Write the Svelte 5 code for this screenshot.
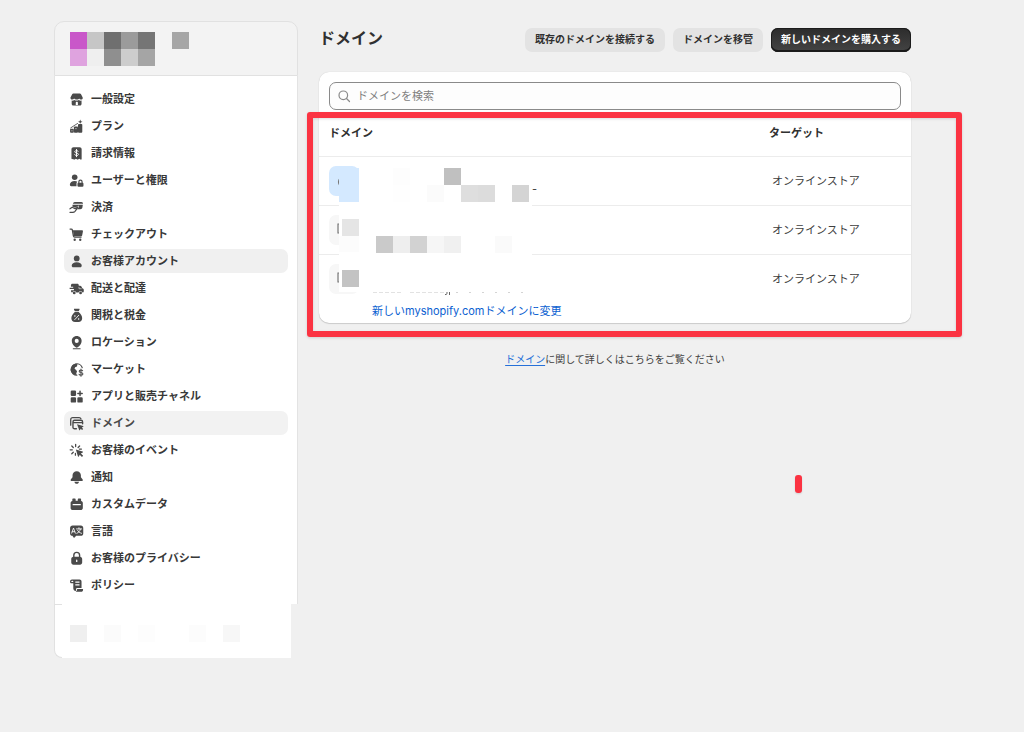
<script>
  const navItems = [
    { icon: 'store', label: '一般設定' },
    { icon: 'plan', label: 'プラン' },
    { icon: 'billing', label: '請求情報' },
    { icon: 'users', label: 'ユーザーと権限' },
    { icon: 'payments', label: '決済' },
    { icon: 'cart', label: 'チェックアウト' },
    { icon: 'person', label: 'お客様アカウント', tone: 'hovered' },
    { icon: 'truck', label: '配送と配達' },
    { icon: 'tax', label: '関税と税金' },
    { icon: 'pin', label: 'ロケーション' },
    { icon: 'globe', label: 'マーケット' },
    { icon: 'apps', label: 'アプリと販売チャネル' },
    { icon: 'domain', label: 'ドメイン', tone: 'current' },
    { icon: 'events', label: 'お客様のイベント' },
    { icon: 'bell', label: '通知' },
    { icon: 'data', label: 'カスタムデータ' },
    { icon: 'language', label: '言語' },
    { icon: 'lock', label: 'お客様のプライバシー' },
    { icon: 'policy', label: 'ポリシー' }
  ];

  const rows = [
    { tone: 'blue', target: 'オンラインストア' },
    { tone: 'grey', target: 'オンラインストア' },
    { tone: 'grey', target: 'オンラインストア' }
  ];

  // Pixelated blocks: [x, y, width, height, colour]
  const headerBlocks = [
    [0, 0, 17, 17, '#c957c9'], [17, 0, 17, 17, '#c6c6c6'], [34, 0, 17, 17, '#6f6f6f'],
    [51, 0, 17, 17, '#9b9b9b'], [68, 0, 17, 17, '#757575'], [102, 0, 17, 17, '#a6a6a6'],
    [0, 17, 17, 17, '#dfa3df'], [17, 17, 17, 17, '#efefef'], [34, 17, 17, 17, '#8f8f8f'],
    [51, 17, 17, 17, '#cdcdcd'], [68, 17, 17, 17, '#a5a5a5']
  ];
  const footerBlocks = [
    [0, 0, 17, 17, '#efefef'], [34, 0, 17, 17, '#fbfbfb'], [68, 0, 17, 17, '#fdfdfd'],
    [119, 0, 17, 17, '#fcfcfc'], [153, 0, 17, 17, '#f7f7f7']
  ];
  const tableBlocks = [
    [0, 0, 20, 34, '#d4e9ff'], [54, 0, 17, 17, '#fdfdfd'], [54, 17, 17, 17, '#fefefe'],
    [88, 17, 17, 17, '#fbfbfb'], [105, 0, 17, 17, '#c0c0c0'], [122, 17, 17, 17, '#dedede'],
    [139, 17, 17, 17, '#dcdcdc'], [173, 17, 17, 17, '#d4d4d4'],
    [3, 51, 17, 17, '#e5e5e5'], [0, 68, 20, 16, '#fcfcfc'], [37, 68, 17, 17, '#cacaca'],
    [54, 68, 17, 17, '#eeeeee'], [71, 68, 17, 17, '#d2d2d2'], [88, 68, 17, 17, '#f6f6f6'],
    [105, 68, 17, 17, '#f0f0f0'], [156, 68, 17, 17, '#fafafa'],
    [3, 102, 17, 17, '#c3c3c3']
  ];
</script>

{#snippet blocks(list, width, height)}
  <svg class="blocks" {width} {height} viewBox="0 0 {width} {height}" shape-rendering="crispEdges" aria-hidden="true">
    {#each list as [x, y, w, h, fill]}
      <rect {x} {y} width={w} height={h} {fill} />
    {/each}
  </svg>
{/snippet}

{#snippet icon(name)}
  <svg class="icon" viewBox="0 0 14 14" aria-hidden="true">
    {#if name === 'store'}
      <path d="M4 1.3h6.2c.4 0 .7.2.9.5l1.6 3c.5 1.300-.3 2.300-1.500 2.300-.8 0-1.400-.4-1.700-1-.4.6-1.100 1-1.900 1h-.9c-.8 0-1.500-.4-1.900-1-.4.6-1 1-1.800 1C1.700 7.100 1 6 1.500 4.900l1.600-3c.2-.4.500-.6.900-.6Z" />
      <path fill-rule="evenodd" d="M2.500 8c1 .2 1.800 0 2.400-.5 1.300.7 3 .7 4.300 0 .7.5 1.600.7 2.500.5v3.300c0 .8-.6 1.400-1.400 1.400H3.900c-.8 0-1.400-.6-1.400-1.400Zm3.800 4.200h2V10c0-.5-.3-.8-.7-.8h-.6c-.4 0-.7.3-.7.8Z" />
    {:else if name === 'plan'}
      <rect x="1" y="9.200" width="3.500" height="3.600" rx=".8" />
      <rect x="4.600" y="7" width="3.800" height="5.800" rx=".8" />
      <rect x="8.400" y="4.600" width="4" height="8.200" rx=".8" />
      <path d="m10.500.5.6 1.500 1.500.6-1.500.6-.6 1.300-.6-1.300-1.500-.6 1.500-.6Z" />
      <path d="M1.600 8.300 5.700 5.600 8 4.200" fill="none" stroke="currentColor" stroke-width=".8" stroke-linecap="round" />
      <path d="M2.300 11h.9M6 9h1" stroke="#fff" stroke-width=".7" />
    {:else if name === 'billing'}
      <path d="M4.200 1.200h5.700c1.100 0 1.900.8 1.900 1.900v9c0 .6-.6.9-1.100.6l-1.100-.8-1.200.8c-.2.200-.5.200-.700 0l-1.200-.8-1.200.8c-.2.200-.5.200-.700 0l-1.200-.5c-.5.3-1.100 0-1.100-.6V3.100c0-1.100.8-1.900 1.900-1.900Z" />
      <path d="M8.600 5.100C8.300 4.500 7.700 4.300 7 4.300c-.9 0-1.600.4-1.600 1.100 0 1.600 3.400.7 3.400 2.400 0 .7-.7 1.100-1.700 1.100-.8 0-1.500-.3-1.800-.9M7 3.200v6.800" fill="none" stroke="#fff" stroke-width=".9" stroke-linecap="round" />
    {:else if name === 'users'}
      <circle cx="5.300" cy="4" r="2.600" />
      <path d="M.8 11c0-2 1.900-3.500 4.500-3.500 1 0 1.800.2 2.500.6-.6.5-.8 1-.8 1.700v2.500H2C1.300 12.300.8 11.700.8 11Z" />
      <path d="M9.200 9.300V8.200a1.500 1.500 0 0 1 3 0v1.100" fill="none" stroke="currentColor" stroke-width="1.100" />
      <rect x="7.900" y="9" width="5.600" height="3.800" rx="1" />
    {:else if name === 'payments'}
      <path d="M5.400 1.800h6.100c1 0 1.700.7 1.600 1.600H3.700c.2-.9.800-1.600 1.700-1.600ZM3.300 4.500h9.600L12.500 7c-.2 1-.9 1.600-1.900 1.600H7.700l1.600-2c.5-.7-.3-1.500-1-1.100L5.700 7.200 3.200 6.100Z" />
      <path d="M.9 8.200 3 6.700l2.700 1.400 2.700-1.700M.9 11.500h2.500c1 0 1.600-.2 2.200-.9l2.600-3.400" fill="none" stroke="currentColor" stroke-width="1.100" stroke-linecap="round" stroke-linejoin="round" />
    {:else if name === 'cart'}
      <path d="M1 1.900h1.100c.5 0 .9.300 1 .8l1 5.600c.1.700.6 1.100 1.200 1.100h6" fill="none" stroke="currentColor" stroke-width="1.200" stroke-linecap="round" />
      <path d="M3.600 3.100h8.500c.6 0 1 .5.900 1.100l-.7 3.500c-.1.600-.6 1-1.200 1H4.600Z" />
      <circle cx="5.300" cy="11.900" r="1.100" /><circle cx="10.500" cy="11.900" r="1.100" />
    {:else if name === 'person'}
      <circle cx="7.200" cy="4.100" r="2.700" />
      <path d="M2.500 10.900c0-1.800 2-3.100 4.700-3.100s4.700 1.300 4.700 3.100c0 .8-.6 1.400-1.400 1.400H3.900c-.8 0-1.400-.6-1.400-1.400Z" />
    {:else if name === 'truck'}
      <path d="M3.300 2.600h4.500c.8 0 1.300.6 1.300 1.300v.5h1.200c.6 0 1 .3 1.300.8l.8 1.500.9.600c.3.200.5.500.5.900v1.300c0 .7-.5 1.200-1.200 1.200a1.900 1.900 0 0 0-3.700 0H6.800a1.900 1.900 0 0 0-3.700 0c-.7-.1-1.200-.6-1.200-1.200V8.600h2.700V7.500H.6V6.400h3.300V5.300H1.800V4c0-.8.6-1.400 1.500-1.400Z" />
      <path d="M9.300 5.500v1.700h2.500" fill="none" stroke="#fff" stroke-width=".5" />
      <circle cx="4.900" cy="11.100" r="1.300" /><circle cx="10.800" cy="11.100" r="1.300" />
    {:else if name === 'tax'}
      <path d="M5.100.8h4.300c.4 0 .6.400.4.800L9 3H5.500l-.8-1.400c-.2-.4 0-.8.400-.8ZM5.400 3.800h3.700c1.900 1.600 3.200 3.700 3.200 5.800 0 2.200-1.400 3.500-3.500 3.500H5.700c-2.100 0-3.500-1.300-3.500-3.500 0-2.100 1.300-4.200 3.200-5.800Z" />
      <path d="m5.400 10.800 3.700-4" stroke="#fff" stroke-width=".8" stroke-linecap="round" />
      <circle cx="5.500" cy="7.400" r=".7" fill="#fff" /><circle cx="9" cy="10.300" r=".7" fill="#fff" />
    {:else if name === 'pin'}
      <path fill-rule="evenodd" d="M7.200 1c2.600 0 4.600 2 4.600 4.500 0 2.700-2 4.500-3.700 6-.5.5-1.300.5-1.800 0-1.700-1.500-3.700-3.300-3.700-6C2.600 3 4.600 1 7.200 1Zm0 6.400a1.900 1.900 0 1 0 0-3.800 1.900 1.900 0 0 0 0 3.800Z" />
      <path d="M4 12.900h6.400" stroke="currentColor" stroke-width="1" stroke-linecap="round" />
    {:else if name === 'globe'}
      <path d="M12.300 5.200A5.300 5.300 0 1 0 7.300 12.300" fill="none" stroke="currentColor" stroke-width="1.100" stroke-linecap="round" />
      <path d="M3.300 2.900 6 1.600l1.900.6-.5 1.900-1.700.7-.5 1.600 1.500 1.100.8 1.400-.7 1.700.1 1.500C3.900 12 1.700 9.600 1.500 7Z" />
      <path d="M12.700 8.200c-.3-.5-.9-.8-1.600-.8-.9 0-1.600.5-1.600 1.200 0 1.700 3.500.8 3.500 2.500 0 .7-.8 1.200-1.800 1.200-.8 0-1.500-.3-1.800-.9M11.200 6.500v6.800" fill="none" stroke="currentColor" stroke-width="1" stroke-linecap="round" />
    {:else if name === 'apps'}
      <rect x="1.600" y="1.500" width="5" height="5" rx="1.100" />
      <rect x="1.600" y="7.700" width="5" height="5" rx="1.100" />
      <rect x="7.800" y="7.700" width="5" height="5" rx="1.100" />
      <path d="M10.300 2.100v4M8.300 4.100h4" stroke="currentColor" stroke-width="1.400" stroke-linecap="round" />
    {:else if name === 'domain'}
      <path d="M1.600 8.600V3.400c0-1 .8-1.800 1.800-1.800h6.100c.8 0 1.400.4 1.600 1" fill="none" stroke="currentColor" stroke-width="1.200" stroke-linecap="round" />
      <path d="M6.900 11.900H5.200c-.8 0-1.500-.6-1.500-1.500V5.500C3.700 4.700 4.300 4 5.200 4h6c.8 0 1.500.7 1.500 1.500v1.700M3.900 6.200h8.700" fill="none" stroke="currentColor" stroke-width="1.300" stroke-linecap="round" />
      <path d="m7.500 7.700 5.700 1.700c.4.100.4.500.1.700l-1.300.7 1.200 1.300-1 1-1.300-1.200-.7 1.300c-.2.300-.600.3-.7-.1Z" />
    {:else if name === 'events'}
      <path d="M6.200 1.200v2.100M2.600 2.800l1.400 1.400M1.100 6.400h2M2.600 10l1.400-1.400M9.900 2.800 8.500 4.200M6 9.700v1.700M9.700 5.700h1.900" stroke="currentColor" stroke-width="1.200" stroke-linecap="round" />
      <path d="m6.400 6 6.300 2c.5.200.5.700.1.900l-1.700.8 2.100 2.200-1.100 1.100L10 10.900l-.8 1.600c-.2.400-.8.400-.9-.1Z" />
    {:else if name === 'bell'}
      <path d="M7.200 1.100c2.300 0 3.900 1.700 3.900 3.900v1.700l1.500 1.900c.7.900.2 1.700-.8 1.700H2.600c-1 0-1.500-.8-.8-1.700l1.500-1.900V5c0-2.200 1.600-3.900 3.900-3.900ZM5 11h4.400c-.2 1.200-1.100 1.900-2.200 1.900S5.200 12.200 5 11Z" />
    {:else if name === 'data'}
      <path fill-rule="evenodd" d="M3.100 2.400c0-.5.4-.9.900-.9h1.300c.5 0 .9.400.9.900v1.200h2V2.400c0-.5.4-.9.900-.9h1.300c.5 0 .9.400.9.900v1.300c1 .2 1.600.9 1.600 1.900v4.600c0 1.100-.9 2-2 2H3.500c-1.100 0-2-.9-2-2V5.600c0-1 .6-1.700 1.600-1.900Zm.3 4.100v1.200h7.600V6.500Z" />
    {:else if name === 'language'}
      <path d="M3.300 1.500h7.800c1.300 0 2.200.9 2.200 2.200v5.100c0 1.300-.9 2.200-2.200 2.200H6.700l-1.500 1.500c-.3.300-.7.300-.9 0L3.200 11C1.900 11 1 10.100 1 8.800V3.700c0-1.300 1-2.200 2.300-2.200Z" />
      <path d="m2.500 8.500 1.700-4.700 1.700 4.700M3 7.200h2.300M7 4.600h4.800M9.300 3.500v1.100M10.700 4.800c-.5 2-1.700 3.100-3.400 3.900M8 5.900c.6 1.300 1.800 2.200 3.700 2.800" fill="none" stroke="#fff" stroke-width=".8" stroke-linecap="round" />
    {:else if name === 'lock'}
      <path d="M4.500 6V4a2.700 2.700 0 0 1 5.400 0v2" fill="none" stroke="currentColor" stroke-width="1.300" />
      <path fill-rule="evenodd" d="M4.100 5.400h6.200c1.100 0 2 .9 2 2v3.400c0 1.100-.9 2-2 2H4.100c-1.100 0-2-.9-2-2V7.400c0-1.100.9-2 2-2Zm2.500 3.100v1.800h1.200V8.500a.6.600 0 0 0-1.200 0Z" />
    {:else if name === 'policy'}
      <path fill-rule="evenodd" d="M2.800 1.300h7c1.100 0 1.900.8 1.900 1.900v6.100H7.900c-.8 0-1.300.5-1.300 1.200v1.600C4.800 12 4 11 4 9.500V5H2.400C1.500 5 1 4.500 1 3.700v-.600c0-1 .7-1.800 1.800-1.800ZM2.200 3v.8H4V3.200c0-.9-1.800-1-1.800-.2ZM5.900 3.300v1.100h3.900V3.300Zm0 2.500v1.100h3.900V5.800Z" />
      <path d="M7.600 10.300h5.500v.8c0 1-.7 1.700-1.700 1.700H6.200c.8-.5 1.400-1.200 1.400-2.500Z" />
    {/if}
  </svg>
{/snippet}

<div class="page">
  <aside class="sidebar">
    <header class="shop">{@render blocks(headerBlocks, 119, 34)}</header>
    <nav class="nav">
      <ul>
        {#each navItems as item}
          <li>
            <a href="#{item.icon}" class={item.tone ?? ''} aria-current={item.tone === 'current' ? 'page' : undefined}>
              {@render icon(item.icon)}
              <span>{item.label}</span>
            </a>
          </li>
        {/each}
      </ul>
    </nav>
    <footer class="account">
      <div class="account-cover">{@render blocks(footerBlocks, 170, 17)}</div>
    </footer>
  </aside>

  <main class="main">
    <header class="heading">
      <h1>ドメイン</h1>
      <div class="actions">
        <button type="button">既存のドメインを接続する</button>
        <button type="button">ドメインを移管</button>
        <button type="button" class="primary">新しいドメインを購入する</button>
      </div>
    </header>

    <section class="card">
      <label class="search">
        <svg viewBox="0 0 14 14" aria-hidden="true">
          <circle cx="6.300" cy="6.300" r="4.300" />
          <path d="m9.500 9.500 3 3" />
        </svg>
        <input type="search" placeholder="ドメインを検索" aria-label="ドメインを検索" />
      </label>

      <table>
        <thead>
          <tr><th scope="col">ドメイン</th><th scope="col" class="target">ターゲット</th></tr>
        </thead>
        <tbody>
          {#each rows as row, i}
            <tr>
              <td>
                <div class="site">
                  <span class="thumb {row.tone}">
                    <svg viewBox="0 0 30 30" aria-hidden="true">
                      {#if row.tone === 'blue'}
                        <circle cx="15" cy="16" r="5.500" />
                      {:else}
                        <path d="M9 9h12v9H9Z" />
                      {/if}
                    </svg>
                  </span>
                  {#if i === 0}<span class="dash">-</span>{/if}
                </div>
              </td>
              <td class="target">{row.target}</td>
            </tr>
          {/each}
        </tbody>
      </table>
      <a class="change" href="#change">新しいmyshopify.comドメインに変更</a>

      <div class="table-cover">{@render blocks(tableBlocks, 193, 124)}</div>
      <svg class="traces" width="156" height="4" viewBox="0 0 156 4" aria-hidden="true">
        <path d="M1 .5h30M38 .5h34" stroke="#e2e2e2" stroke-dasharray="4 2" />
        <path d="M84 .5h70" stroke="#d4d4d4" stroke-dasharray="2 11" />
        <path d="M73 2.500c2 .4 2-.5 2-2.500M77.500 0v3" fill="none" stroke="#666" />
      </svg>
      <div class="frame"></div>
    </section>

    <p class="help"><a href="#help">ドメイン</a>に関して詳しくはこちらをご覧ください</p>
    <div class="tick"></div>
  </main>
</div>

<style>
  :global(body) {
    background: #f0f0f0;
  }

  .page {
    display: flex;
    align-items: flex-start;
    gap: 21px;
    padding: 21px 113px 32px 54px;
    color: #303030;
    font: 11px/16px Inter, "Noto Sans CJK JP", sans-serif;
  }

  .sidebar {
    flex: 0 0 244px;
  }

  .shop {
    padding: 10px 15px 9px;
    border: 1px solid #e1e1e1;
    border-radius: 10px 10px 0 0;
    background: #f3f3f3;
  }

  .blocks {
    display: block;
  }

  .nav {
    padding: 11px 9px 7px;
    border: solid #e3e3e3;
    border-width: 0 1px;
    background: #fff;
  }

  .nav ul {
    display: grid;
    gap: 3px;
    margin: 0;
    padding: 0;
    list-style: none;
  }

  .nav a {
    display: flex;
    align-items: center;
    gap: 7px;
    height: 24px;
    padding: 0 5px;
    border-radius: 7px;
    color: #383838;
    font-weight: 600;
    text-decoration: none;
  }

  .nav a.hovered {
    background: #f0f0f0;
  }

  .nav a.current {
    background: #f2f2f2;
    color: #4a4a4a;
  }

  .icon {
    flex: none;
    width: 15px;
    height: 15px;
    color: #4a4a4a;
    fill: currentColor;
  }

  .account {
    margin-right: 7px;
    border: solid #e1e1e1;
    border-width: 1px 0 1px 1px;
    border-radius: 0 0 0 8px;
    background: #fff;
  }

  .account-cover {
    margin: -1px 0 -1px 7px;
    padding: 21px 8px 16px;
    background: #fff;
  }

  .main {
    position: relative;
    flex: 1;
    min-width: 0;
  }

  .heading {
    display: flex;
    align-items: flex-start;
    justify-content: space-between;
    padding-top: 7px;
  }

  h1 {
    margin: 0;
    font-size: 16px;
    line-height: 20px;
    font-weight: 700;
  }

  .actions {
    display: flex;
    gap: 8px;
  }

  .actions button {
    height: 24px;
    padding: 0 10px 2px;
    border: 0;
    border-radius: 7px;
    background: #e3e3e3;
    color: #303030;
    font: 600 10px/16px Inter, "Noto Sans CJK JP", sans-serif;
  }

  .actions .primary {
    background: linear-gradient(#2c2c2c, #444);
    box-shadow: inset 0 0 0 1px #1c1c1c, inset 0 -2px 0 #1a1a1a;
    color: #fff;
  }

  .card {
    position: relative;
    margin-top: 20px;
    padding: 10px 0 4px;
    border-radius: 10px;
    background: #fff;
    box-shadow: 0 0 1px #0003, 0 1px 1px #0002;
  }

  .search {
    display: flex;
    align-items: center;
    gap: 6px;
    height: 26px;
    margin: 0 10px;
    padding: 0 7px;
    border: 1px solid #8a8a8a;
    border-radius: 7px;
    background: #fdfdfd;
  }

  .search svg {
    flex: none;
    width: 14px;
    height: 14px;
    fill: none;
    stroke: #8a8a8a;
    stroke-width: 1.2;
    stroke-linecap: round;
  }

  .search input {
    flex: 1;
    min-width: 0;
    padding: 0;
    border: 0;
    outline: 0;
    background: none;
    color: #303030;
    font: inherit;
  }

  .search input::placeholder {
    color: #808080;
    opacity: 1;
  }

  table {
    width: 100%;
    border-collapse: collapse;
    table-layout: fixed;
  }

  th {
    height: 46px;
    padding: 0 10px;
    font-weight: 600;
    text-align: left;
  }

  td {
    height: 48px;
    padding: 0 10px;
    border-top: 1px solid #ececec;
    color: #404040;
  }

  th.target {
    width: 132px;
  }

  td.target {
    padding-left: 13px;
  }

  .site {
    display: flex;
    align-items: center;
  }

  .thumb {
    width: 30px;
    height: 30px;
    border-radius: 7px;
    background: #f7f7f7;
  }

  .thumb.blue {
    background: #d4e9ff;
  }

  .thumb svg {
    display: block;
    fill: none;
    stroke: #777;
    stroke-width: 1.2;
  }

  .dash {
    margin-left: 173px;
    padding-top: 16px;
  }

  .change {
    display: block;
    width: fit-content;
    margin-left: 53px;
    color: #0b61d1;
    text-decoration: none;
  }

  .table-cover {
    position: absolute;
    top: 96px;
    left: 20px;
    background: #fff;
  }

  .traces {
    position: absolute;
    top: 220px;
    left: 53px;
  }

  .frame {
    position: absolute;
    inset: 40px -51px -14px -12px;
    border: 6px solid #fb3342;
    border-radius: 3px;
    box-shadow: 0 1px 3px #0002, inset 0 1px 3px #0002;
  }

  .help {
    margin: 28px 0 0;
    color: #404040;
    font-size: 10px;
    text-align: center;
  }

  .help a {
    color: #2670d8;
    text-underline-offset: 2px;
  }

  .tick {
    position: absolute;
    top: 454px;
    right: 109px;
    width: 7px;
    height: 18px;
    border-radius: 3px;
    background: #fb3342;
    box-shadow: 0 1px 2px #0002;
  }
</style>
